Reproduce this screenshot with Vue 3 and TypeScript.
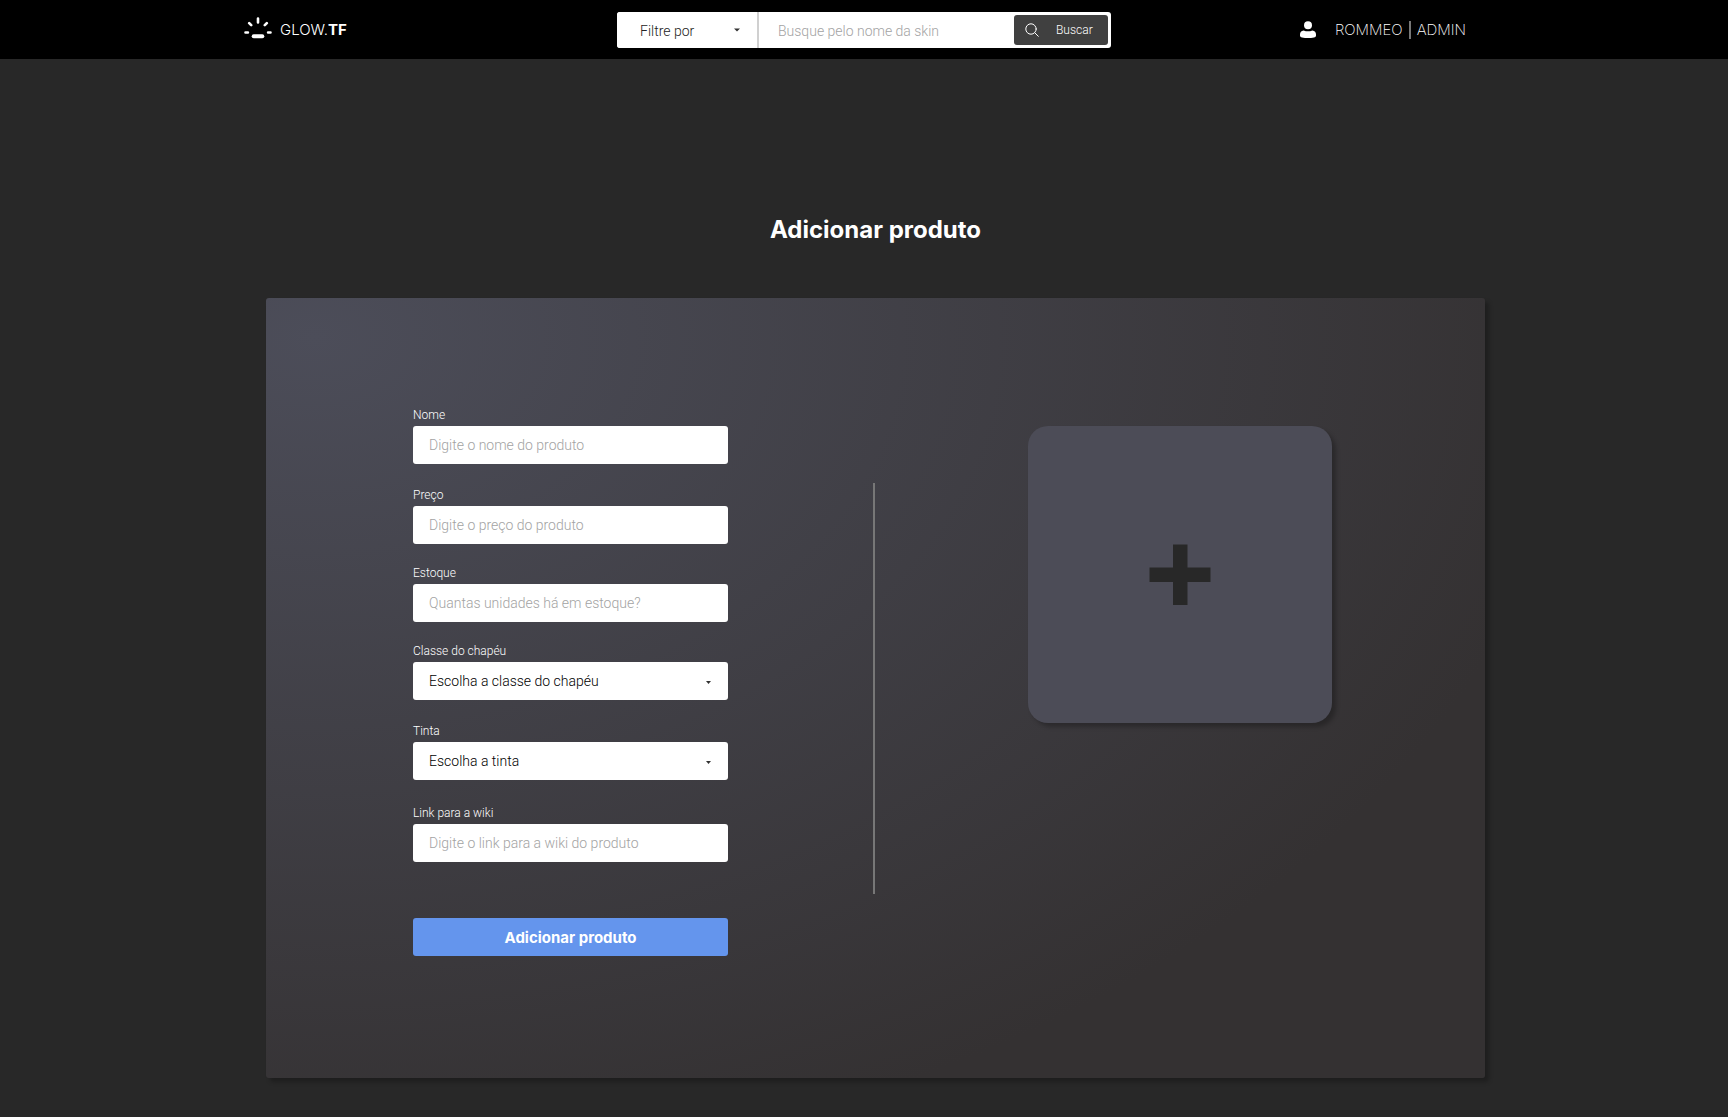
<script setup lang="ts">
import { reactive, ref } from 'vue'

interface Field {
  id: string
  label: string
  placeholder: string
  options?: string[]
}

const fields: Field[] = [
  { id: 'nome', label: 'Nome', placeholder: 'Digite o nome do produto' },
  { id: 'preco', label: 'Preço', placeholder: 'Digite o preço do produto' },
  { id: 'estoque', label: 'Estoque', placeholder: 'Quantas unidades há em estoque?' },
  { id: 'classe', label: 'Classe do chapéu', placeholder: 'Escolha a classe do chapéu', options: [] },
  { id: 'tinta', label: 'Tinta', placeholder: 'Escolha a tinta', options: [] },
  { id: 'wiki', label: 'Link para a wiki', placeholder: 'Digite o link para a wiki do produto' },
]

const values = reactive<Record<string, string>>(
  Object.fromEntries(fields.map((field) => [field.id, ''])),
)
const filter = ref('')
const search = ref('')
</script>

<template>
  <header class="topbar">
    <a class="brand" href="#">
      <svg width="28" height="22" viewBox="0 0 28 22" fill="none" stroke="#fff" stroke-linecap="round" aria-hidden="true">
        <path d="M14 1.5v4M5.2 6.2l2 2M22.8 6.2l-2 2M1.5 15.5h2.4M24.1 15.5h2.4" stroke-width="2.6" />
        <path d="M9.7 19.3h8.6" stroke-width="4" />
      </svg>
      <span>GLOW.<b>TF</b></span>
    </a>

    <form class="search" role="search" @submit.prevent>
      <div class="select search-filter">
        <select v-model="filter" aria-label="Filtre por">
          <option value="">Filtre por</option>
        </select>
        <svg class="caret" width="6" height="4" viewBox="0 0 6 4" aria-hidden="true"><path d="M0 .5h6L3 3.5z" fill="#333" /></svg>
      </div>
      <input v-model="search" class="search-input" type="text" placeholder="Busque pelo nome da skin" aria-label="Busque pelo nome da skin" />
      <button class="search-button" type="submit">
        <svg width="14" height="14" viewBox="0 0 14 14" fill="none" stroke="#fff" stroke-linecap="round" aria-hidden="true">
          <circle cx="6" cy="6" r="5.2" />
          <path d="M9.8 9.8l3.5 3.5" />
        </svg>
        <span>Buscar</span>
      </button>
    </form>

    <div class="user">
      <svg width="16" height="18" viewBox="0 0 16 18" fill="#fff" aria-hidden="true">
        <circle cx="8" cy="4.2" r="4" />
        <path d="M3.6 9.4Q8 11.2 12.4 9.4Q16 10 16 13.6v1.2Q15.8 16.2 14 16.5Q8 17.6 2 16.5Q.2 16.2 0 14.8v-1.2Q0 10 3.6 9.4z" />
      </svg>
      <a href="#">ROMMEO</a>
      <span class="user-divider"></span>
      <a href="#">ADMIN</a>
    </div>
  </header>

  <main class="page">
    <h1>Adicionar produto</h1>

    <section class="card">
      <form class="form" @submit.prevent>
        <div class="fields">
          <div v-for="field in fields" :key="field.id" class="field">
            <label :for="field.id">{{ field.label }}</label>
            <div v-if="field.options" class="select">
              <select :id="field.id" v-model="values[field.id]">
                <option value="">{{ field.placeholder }}</option>
                <option v-for="option in field.options" :key="option">{{ option }}</option>
              </select>
              <svg class="caret" width="5" height="3" viewBox="0 0 5 3" aria-hidden="true"><path d="M0 0h5L2.5 3z" fill="#333" /></svg>
            </div>
            <input v-else :id="field.id" v-model="values[field.id]" type="text" :placeholder="field.placeholder" />
          </div>
        </div>
        <button class="submit" type="submit">Adicionar produto</button>
      </form>

      <div class="divider"></div>

      <div class="media">
        <button class="upload" type="button" aria-label="Adicionar imagem">
          <svg width="62" height="62" viewBox="0 0 62 62" aria-hidden="true">
            <path d="M24 .5h14.5v23h23V38h-23v23H24V38H.5V23.5H24z" fill="#282828" />
          </svg>
        </button>
      </div>
    </section>
  </main>
</template>

<style>
body {
  background: #282828;
}
</style>

<style scoped>
.topbar,
.page {
  font-family: Inter, 'Liberation Sans', sans-serif;
  color: #fff;
}

* {
  box-sizing: border-box;
}

a {
  color: inherit;
  text-decoration: none;
}

input,
select,
button {
  margin: 0;
  border: 0;
  font-family: inherit;
}

input,
select {
  width: 100%;
  min-width: 0;
  background: #fff;
  font-family: Roboto, 'Liberation Sans', sans-serif;
  font-size: 14px;
  font-weight: 300;
}

input::placeholder {
  color: #a3a3a3;
  opacity: 1;
}

button {
  cursor: pointer;
}

.topbar {
  display: grid;
  grid-template-columns: 1fr minmax(0, 494px) 1fr;
  align-items: center;
  height: 59px;
  background: #000;
}

.brand {
  display: flex;
  align-items: center;
  gap: 8px;
  padding-left: 244px;
  font-size: 15px;
  font-weight: 300;
}

.brand svg {
  margin-bottom: 4px;
}

.brand b {
  font-weight: 700;
}

.search {
  display: flex;
  align-items: center;
  height: 36px;
  padding-right: 3px;
  overflow: hidden;
  border-radius: 3px;
  background: #fff;
}

.select {
  position: relative;
}

.select select {
  appearance: none;
  color: #000;
}

.caret {
  position: absolute;
  top: 50%;
  right: 17px;
  pointer-events: none;
}

.search-filter {
  flex: 0 0 142px;
  border-right: 2px solid #d0d0d0;
}

.search-filter select {
  height: 36px;
  padding: 2px 23px 0;
  color: #222;
}

.search-filter .caret {
  top: 16px;
}

.search-input {
  flex: 1;
  height: 36px;
  padding: 2px 19px 0;
}

.search-button {
  display: flex;
  flex: 0 0 94px;
  align-items: center;
  gap: 17px;
  height: 30px;
  padding: 0 11px;
  border-radius: 3px;
  background: #404040;
  color: #fff;
  font-family: Roboto, 'Liberation Sans', sans-serif;
  font-size: 12px;
  font-weight: 300;
}

.user {
  display: flex;
  align-items: center;
  justify-content: flex-end;
  padding-right: 262px;
  font-size: 15px;
  font-weight: 200;
}

.user svg {
  margin-right: 19px;
}

.user-divider {
  width: 2px;
  height: 18px;
  margin: 0 6px;
  background: #777;
}

.page {
  padding: 155px 243px 39px 266px;
}

h1 {
  margin: 0 0 53px;
  font-size: 24px;
  font-weight: 700;
  line-height: 31px;
  text-align: center;
}

.card {
  display: grid;
  grid-template-columns: minmax(0, 607fr) 2px minmax(0, 610fr);
  align-items: start;
  min-height: 780px;
  border-radius: 3px;
  background: radial-gradient(104% 108% at 4% 5%, #4c4d59 0%, #343132 100%);
  box-shadow: 4px 4px 4px rgba(0, 0, 0, 0.25);
}

.form {
  padding: 108px 145px 0 147px;
}

.fields {
  display: grid;
  grid-template-rows: 58px 80px 78px 78px 80px 82px;
  align-items: end;
}

.field label {
  display: block;
  height: 20px;
  font-family: Roboto, 'Liberation Sans', sans-serif;
  font-size: 12px;
  font-weight: 300;
  line-height: 18px;
}

.field input,
.field select {
  display: block;
  height: 38px;
  padding: 0 16px;
  border-radius: 3px;
}

.submit {
  width: 100%;
  height: 38px;
  margin-top: 56px;
  border-radius: 3px;
  background: #6495ed;
  color: #fff;
  font-size: 15px;
  font-weight: 700;
}

.divider {
  height: 411px;
  margin-top: 185px;
  background: #777;
}

.media {
  display: flex;
  justify-content: center;
  padding-top: 128px;
}

.upload {
  display: grid;
  place-items: center;
  width: 304px;
  height: 297px;
  padding: 0;
  border-radius: 20px;
  background: #4c4c57;
  box-shadow: 4px 4px 4px rgba(0, 0, 0, 0.25);
}
</style>
